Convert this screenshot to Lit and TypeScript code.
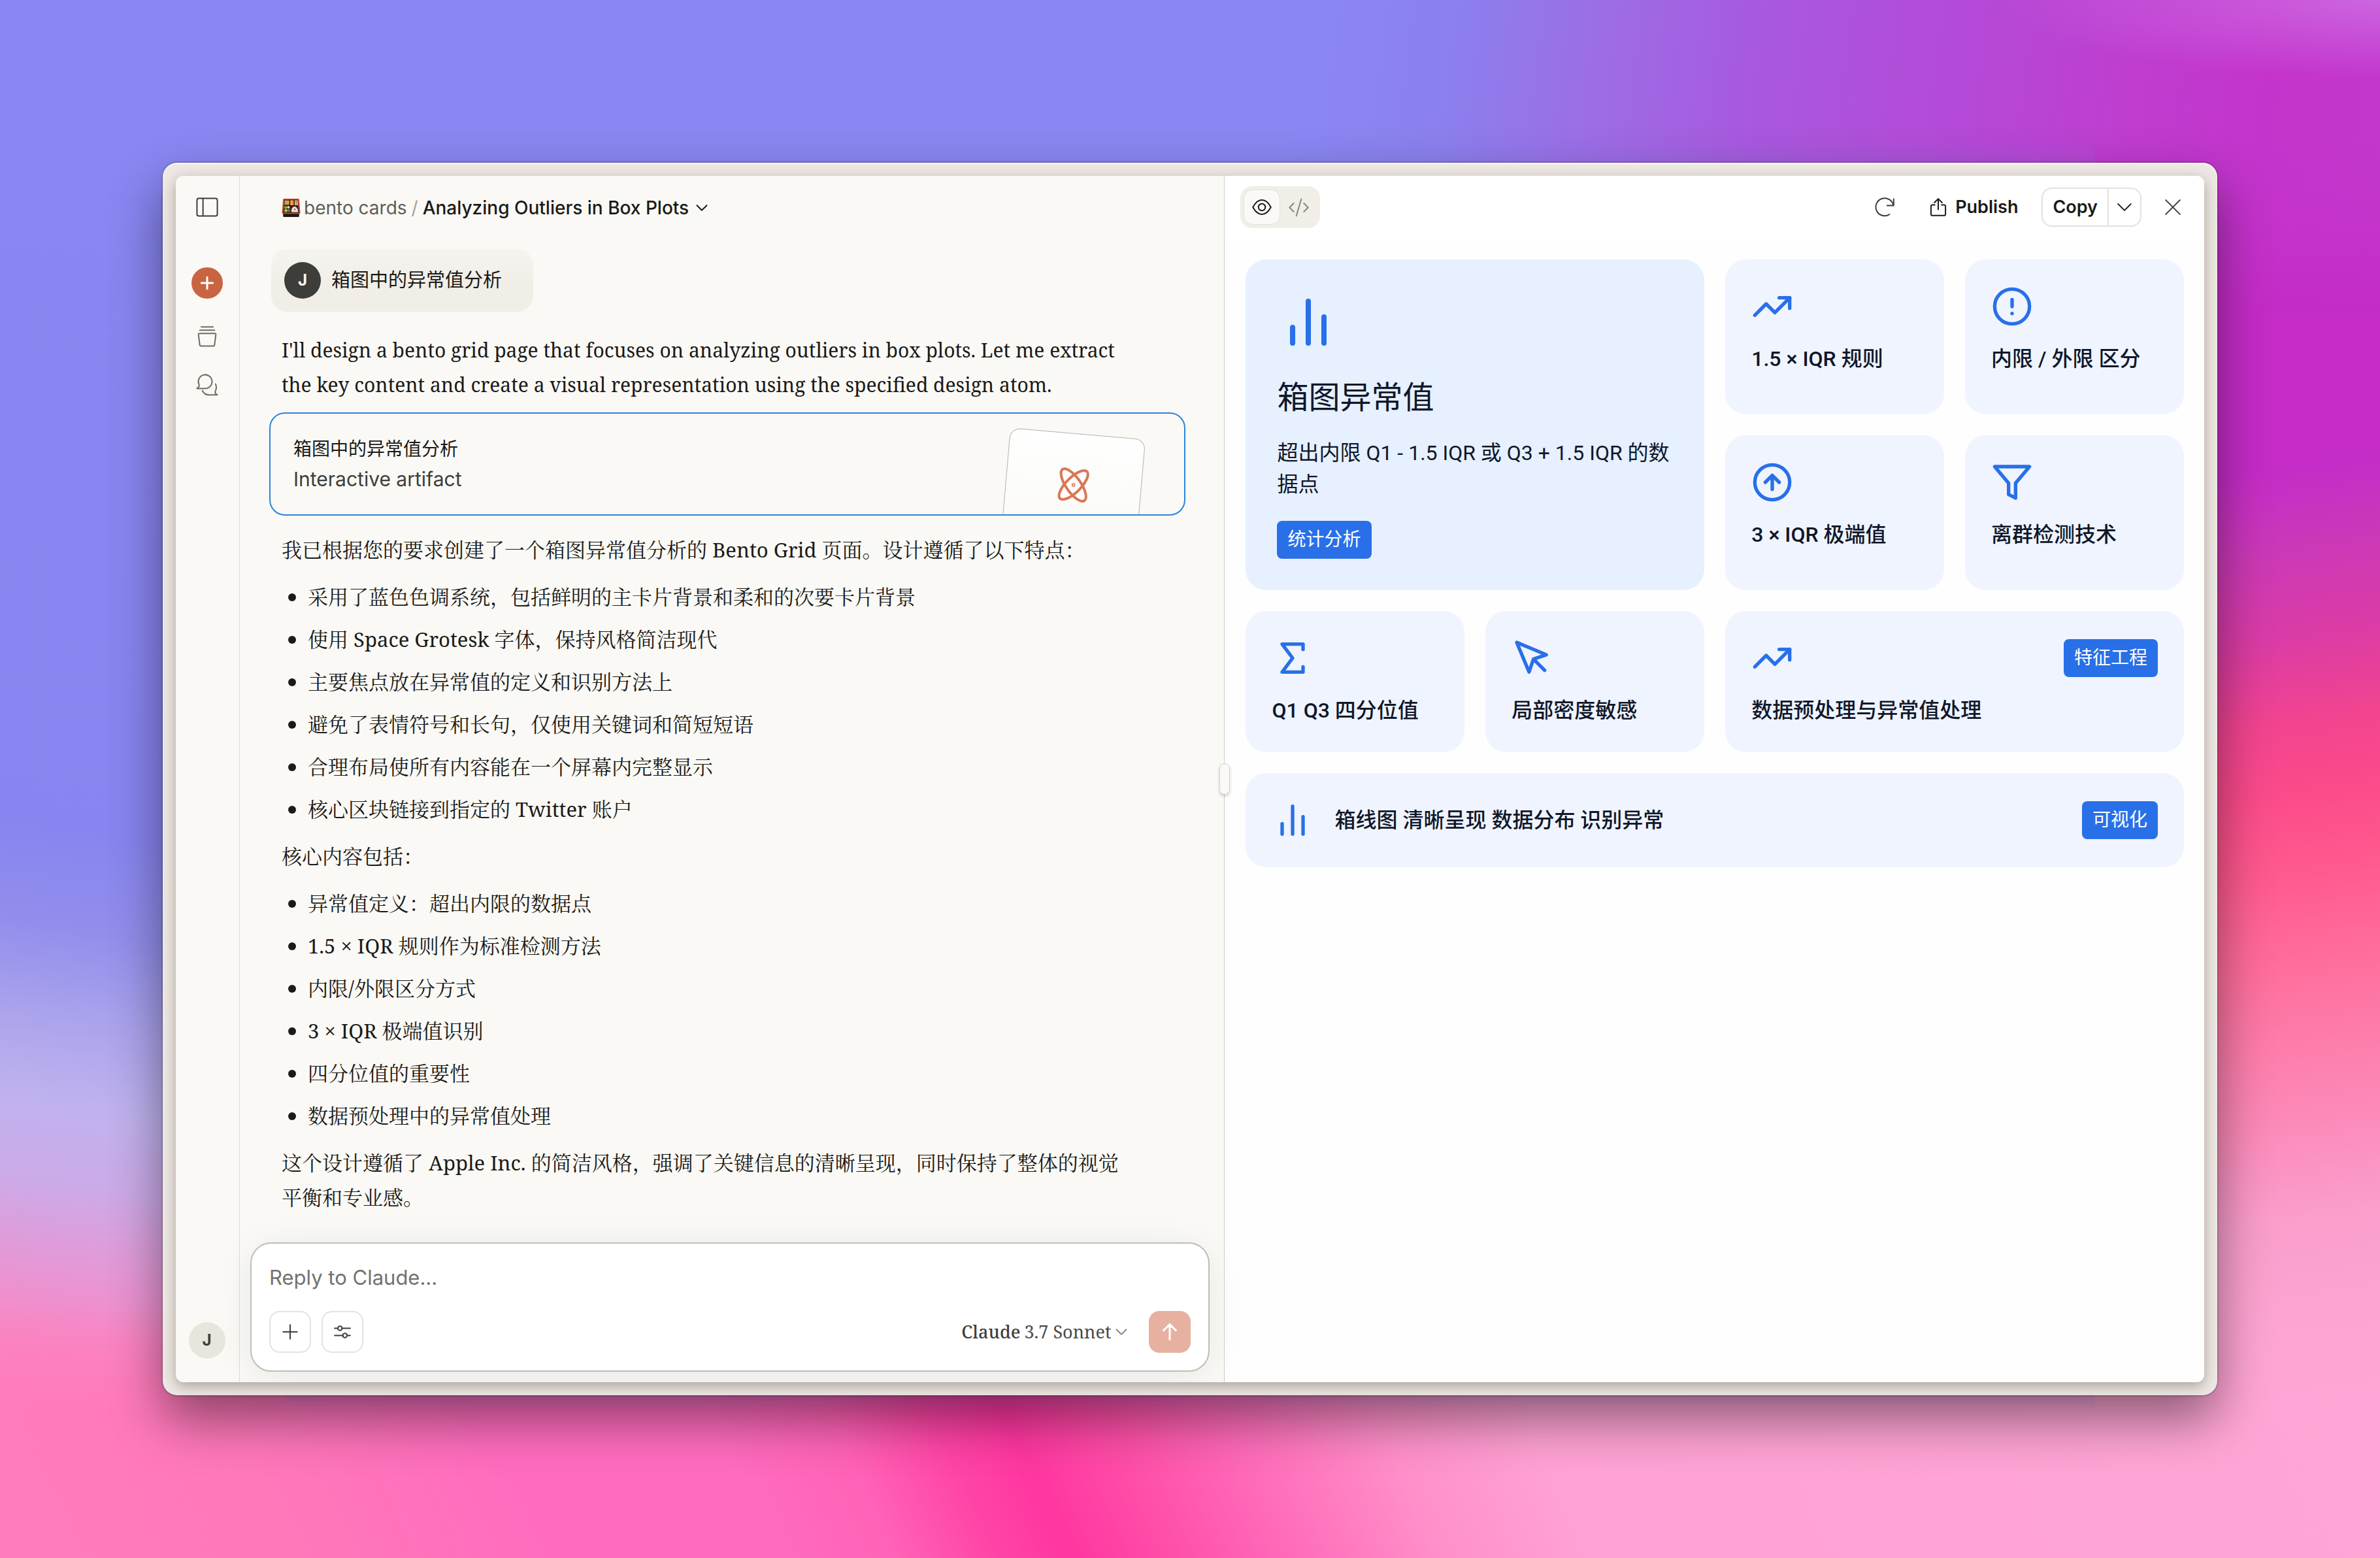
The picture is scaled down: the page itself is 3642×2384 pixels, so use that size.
import { LitElement, html, css, svg, SVGTemplateResult, TemplateResult } from "lit";
import { customElement, property, state } from "lit/decorators.js";

/* Glyph bodies, all drawn on a 24 × 24 grid. */
const GLYPHS: Record<string, SVGTemplateResult> = {
  panel: svg`<rect x="1" y="2.500" width="22" height="19" rx="2" /><path d="M7.500 2.500v19" />`,
  plus: svg`<path d="M12 4v16M4 12h16" />`,
  projects: svg`<path d="M5.200 1h13.600M3.600 4.600h16.800M3 8.400h18a1 1 0 0 1 1 1.100l-1.500 12a1.600 1.600 0 0 1-1.600 1.400H5.100a1.600 1.600 0 0 1-1.600-1.400L2 9.500a1 1 0 0 1 1-1.100Z" />`,
  chats: svg`<path d="M1 15.800h8.800a7.400 7.400 0 1 0-6.600-4.200c.5 1.100.1 2.700-2.200 4.200Z" /><path d="M6.800 18.200c1.500 3.200 4.600 4.600 7.600 4.600H23c-2-1.200-2.700-2.800-2.200-4 1.400-2.600 1.400-5.200.3-7.800" />`,
  chevron: svg`<path d="M3 7.500l9 9 9-9" />`,
  sliders: svg`<path d="M1 7h4.500M11.500 7H23M1 17h11.500M18.500 17H23" /><circle cx="8.500" cy="7" r="3" /><circle cx="15.500" cy="17" r="3" />`,
  up: svg`<path d="M12 22V2M4 10l8-8 8 8" />`,
  eye: svg`<path d="M1 12C4.500 5.500 8 3.200 12 3.200S19.500 5.500 23 12c-3.500 6.500-7 8.800-11 8.800S4.500 18.500 1 12Z" /><circle cx="12" cy="12" r="4.200" />`,
  code: svg`<path d="M6 7l-5 5 5 5M18 7l5 5-5 5M15 2L9 22" />`,
  refresh: svg`<path d="M18 20.800A10.800 10.800 0 1 1 22.600 9.800" /><path d="M23 2v8h-8" />`,
  share: svg`<path d="M7.500 9H4.200A1.700 1.700 0 0 0 2.500 10.700v10.600A1.700 1.700 0 0 0 4.200 23h15.600a1.700 1.700 0 0 0 1.700-1.700V10.700A1.700 1.700 0 0 0 19.800 9h-3.300M12 15V1M7 6l5-5 5 5" />`,
  close: svg`<path d="M2 2l20 20M22 2L2 22" />`,
  atom: svg`<ellipse cx="12" cy="12" rx="5.400" ry="14" transform="rotate(40 12 12)" /><ellipse cx="12" cy="12" rx="5.400" ry="14" transform="rotate(-40 12 12)" /><circle cx="12" cy="12" r=".4" />`,
  bars: svg`<path d="M18 20V10M12 20V4M6 20v-6" />`,
  trend: svg`<path d="M22 7l-8.500 8.500-5-5L2 17" /><path d="M16 7h6v6" />`,
  alert: svg`<circle cx="12" cy="12" r="10" /><path d="M12 8v4M12 16h.01" />`,
  circleUp: svg`<circle cx="12" cy="12" r="10" /><path d="M16 12l-4-4-4 4M12 16V8" />`,
  funnel: svg`<path d="M22 3H2l8 9.460V19l4 2v-8.540L22 3Z" />`,
  sigma: svg`<path d="M18 7V4H6l6 8-6 8h12v-3" />`,
  pointer: svg`<path d="M3 3l7.070 16.970 2.510-7.390 7.390-2.510L3 3Z" /><path d="M13 13l6 6" />`,
};

@customElement("ui-icon")
export class UiIcon extends LitElement {
  @property() name = "plus";
  @property({ type: Number }) size = 24;
  @property({ type: Number }) weight = 2;

  static styles = css`
    :host { display: inline-flex; flex: none; }
    svg { display: block; overflow: visible; fill: none; stroke: currentColor; stroke-linecap: round; stroke-linejoin: round; }
  `;

  render(): TemplateResult {
    return html`<svg width=${this.size} height=${this.size} viewBox="0 0 24 24" stroke-width=${(this.weight * 24) / this.size} aria-hidden="true">${GLYPHS[this.name]}</svg>`;
  }
}

@customElement("bento-card")
export class BentoCard extends LitElement {
  @property() icon = "bars";
  @property() label = "";
  @property() tag = "";

  static styles = css`
    :host {
      display: flex; flex-direction: column; gap: 24px; padding: 40px; border-radius: 32px;
      background: #f0f4fe; color: #0f172a; font-size: 32px; line-height: 48px; font-weight: 500;
    }
    :host([row]) { flex-direction: row; align-items: center; gap: 32px; }
    :host([row]) .top { display: contents; }
    :host([row]) .label { flex: 1; order: 1; }
    :host([row]) .tag { order: 2; }
    .top { display: flex; align-items: center; justify-content: space-between; }
    ui-icon { color: #2970e8; }
    .label { margin: 0; font: inherit; }
    .tag { padding: 8px 16px; border-radius: 8px; background: #2970e8; color: #fff; font-size: 28px; line-height: 42px; font-weight: 400; }
  `;

  render(): TemplateResult {
    return html`
      <div class="top">
        <ui-icon .name=${this.icon} .size=${64} .weight=${5.33}></ui-icon>
        ${this.tag ? html`<span class="tag">${this.tag}</span>` : null}
      </div>
      <h3 class="label">${this.label}</h3>
    `;
  }
}

const FEATURES = [
  "采用了蓝色色调系统，包括鲜明的主卡片背景和柔和的次要卡片背景",
  "使用 Space Grotesk 字体，保持风格简洁现代",
  "主要焦点放在异常值的定义和识别方法上",
  "避免了表情符号和长句，仅使用关键词和简短短语",
  "合理布局使所有内容能在一个屏幕内完整显示",
  "核心区块链接到指定的 Twitter 账户",
];

const TOPICS = [
  "异常值定义：超出内限的数据点",
  "1.5 × IQR 规则作为标准检测方法",
  "内限/外限区分方式",
  "3 × IQR 极端值识别",
  "四分位值的重要性",
  "数据预处理中的异常值处理",
];

@customElement("app-root")
export class AppRoot extends LitElement {
  @state() private view: "preview" | "code" = "preview";

  static styles = css`
    :host {
      --ui: Inter, "Noto Sans CJK SC", sans-serif;
      --prose: "Noto Serif", "Noto Serif CJK SC", "Liberation Serif", serif;
      --bento: Roboto, "Noto Sans CJK SC", sans-serif;
      --ink: #1a1a18;
      --soft: #3d3d3a;
      --paper: #faf9f5;
      display: block;
      font-family: var(--ui);
      color: var(--ink);
    }
    *, *::before, *::after { box-sizing: border-box; }
    button, select, textarea { font: inherit; color: inherit; border: 0; background: none; padding: 0; margin: 0; }
    button { display: inline-flex; align-items: center; justify-content: center; cursor: pointer; }
    a { color: inherit; text-decoration: none; }

    .desktop { position: relative; isolation: isolate; display: flex; min-height: 100vh; padding: 249px; overflow: hidden; background: #8a87f3; }
    .wall { position: absolute; z-index: -1; }
    .wall-left {
      inset: 0 88% 0 0;
      background: linear-gradient(188deg, #8a87f3 0, #8885f0 54%, #928eec 60%, #aca4ec 66%, #c0b2ee 71%, #ccaae8 76%, #e498d6 81%, #f68ac8 85%, #ff80be 90%, #ff74ba 100%);
    }
    .wall-right {
      inset: 0 0 0 88%;
      background: linear-gradient(171deg, #b84cd8 0, #c238ce 8%, #c52cc8 20%, #c52cc8 31%, #cb38b8 36%, #dc3ca4 42%, #f24490 47%, #fa4a8a 51%, #ff588e 56%, #ff6a98 61%, #fd7cab 67%, #fc8ab9 72%, #fa9ecc 78%, #fda4d2 84%, #ffa6d6 100%);
    }
    .wall-top {
      inset: 0 0 80% 0;
      background: linear-gradient(98deg, #8a87f3 54%, #8b80ee 60%, #9c6ee6 66%, #a858de 73%, #b44ad8 81%, #be3ed0 88%, #c434cc 94%, #c238cc 100%);
      mask-image: linear-gradient(#000 45%, transparent);
    }
    .wall-glow {
      inset: 0 0 95% 84%;
      background: radial-gradient(100% 100% at 100% 0, rgba(208, 120, 232, 0.7), transparent);
    }
    .wall-bottom {
      inset: 84% 0 0 0;
      background: linear-gradient(66deg, #ff7cbc 0, #ff78ba 12%, #ff6cbe 22%, #ff6cbe 31%, #ff62b6 36%, #ff44a6 40%, #ff36a0 43%, #ff4ea8 47%, #ff6cba 52%, #ff90ca 58%, #ffa2d4 64%, #ffa6d6 100%);
      mask-image: linear-gradient(transparent, #000 40%);
    }

    .frame {
      flex: 1; display: flex; min-width: 0; padding: 20px; border-radius: 22px; background: #ede8e3;
      box-shadow: 0 0 3px rgba(0, 0, 0, 0.6), 0 36px 80px rgba(0, 0, 0, 0.46), inset 0 2px 2px rgba(255, 255, 255, 0.7);
    }
    .window {
      flex: 1; min-width: 0; display: grid; grid-template-columns: 98px minmax(0, 503fr) minmax(0, 500fr);
      border-radius: 12px; overflow: hidden; background: var(--paper);
    }
    .lift { flex: 1; display: flex; min-width: 0; border-radius: 12px; box-shadow: 0 6px 20px rgba(40, 20, 10, 0.34); }

    .rail { display: flex; flex-direction: column; align-items: center; padding: 24px 2px 36px 0; border-right: 1px solid #dcdad2; color: #6c6b66; }
    .rail-button { width: 48px; height: 48px; }
    .rail-toggle { margin-bottom: 68px; color: var(--soft); }
    .rail-new { margin-bottom: 34px; border-radius: 50%; background: #c96442; color: #fff; }
    .rail-projects { margin-bottom: 26px; }
    .avatar { display: inline-flex; align-items: center; justify-content: center; flex: none; width: 56px; height: 56px; border-radius: 50%; font-size: 24px; line-height: 32px; font-weight: 700; }
    .avatar-light { margin-top: auto; background: #e8e6dc; color: var(--soft); }
    .avatar-dark { background: #3d3d3a; color: var(--paper); }

    .chat { position: relative; display: flex; flex-direction: column; min-width: 0; border-right: 1px solid #d2cfcc; }
    .bar { display: flex; align-items: center; height: 96px; flex: none; }
    .crumbs { padding: 2px 0 0 64px; gap: 7px; font-size: 28px; line-height: 40px; }
    .crumb-project { display: inline-flex; align-items: center; gap: 5px; color: #5e5d59; }
    .crumb-slash { color: #a3a19a; }
    .crumb-title { gap: 10px; font-weight: 500; }

    .messages { flex: 1; padding: 16px 59px 0 45px; }
    .user { display: inline-flex; align-items: center; gap: 16px; margin: 0 0 0 3px; padding: 20px 48px 20px 20px; border-radius: 24px; background: linear-gradient(#f5f4ef, #f0eee6 60%); font-size: 29px; line-height: 40px; }
    .user p { margin: 0; }
    .prose { margin: 0 80px 0 19px; font-family: var(--prose); font-size: 31px; line-height: 53px; }
    .prose p { margin: 0; }
    .prose ul { display: flex; flex-direction: column; gap: 12px; margin: 19px 0; padding: 0; list-style: none; }
    .prose li { display: flex; align-items: center; gap: 18px; padding-left: 10px; }
    .prose li::before { content: ""; width: 12px; height: 12px; border-radius: 50%; background: var(--ink); }
    .intro { margin-top: 32px; font-size: 30px; }

    .artifact { display: flex; width: 100%; height: 158px; margin: 16px 0 26px; padding: 0 68px 0 35px; justify-content: space-between; align-items: flex-start; border: 2px solid #2c84db; border-radius: 24px; overflow: hidden; text-align: left; }
    .artifact-text { display: flex; flex-direction: column; padding-top: 31px; font-size: 28px; line-height: 46px; }
    .artifact-kind { color: var(--soft); font-size: 30px; }
    .sheet { display: flex; align-items: flex-start; justify-content: center; width: 208px; height: 220px; margin-top: 30px; padding-top: 53px; border: 1px solid #b4b3ae; border-radius: 16px; background: linear-gradient(#fff, var(--paper) 70%); color: #d97757; transform: rotate(5deg); }

    .composer { display: flex; flex-direction: column; gap: 27px; margin: 0 22px 16px 16px; padding: 28px 27px 27px; border: 2px solid #bdbdbb; border-radius: 32px; background: #fff; box-shadow: 0 8px 56px rgba(0, 0, 0, 0.07); }
    .composer-input { display: block; width: 100%; height: 48px; resize: none; outline: none; overflow: hidden; font-size: 31px; line-height: 48px; }
    .composer-input::placeholder { color: #73726c; opacity: 1; }
    .composer-row { display: flex; align-items: center; gap: 16px; }
    .square { width: 64px; height: 64px; border-radius: 16px; }
    .square-line { border: 2px solid #e4e3e0; color: var(--soft); }
    .send { margin-left: 16px; background: #e6b1a0; color: #fff; }
    .model { display: flex; align-items: center; gap: 6px; margin-left: auto; font-family: var(--prose); font-size: 27px; line-height: 40px; color: var(--soft); }
    .model-name { font-weight: 500; }
    .model select { appearance: none; field-sizing: content; outline: none; color: #4b4a46; }
    .model ui-icon { color: #8a8984; }

    .grip { position: absolute; z-index: 2; top: 50%; right: -9px; width: 16px; height: 48px; margin-top: -24px; border: 1px solid #d4d2cc; border-radius: 8px; background: var(--paper); box-shadow: 0 3px 5px rgba(0, 0, 0, 0.16); }

    .pane { display: flex; flex-direction: column; min-width: 0; background: #fefefe; }
    .pane-bar { gap: 24px; padding: 0 24px; background: #fff; font-size: 27px; line-height: 40px; font-weight: 600; }
    .switch { display: flex; margin-right: auto; padding: 5px; border-radius: 18px; background: #f0eee6; }
    .switch button { width: 56px; height: 54px; border: 1px solid transparent; border-radius: 14px; color: #87867f; }
    .switch button[aria-pressed="true"] { background: var(--paper); border-color: #e4e2da; color: var(--ink); }
    .tool { width: 64px; height: 48px; color: var(--soft); }
    .tool-close { width: 48px; }
    .publish { gap: 12px; padding: 0 12px; }
    .split { display: flex; height: 60px; border: 2px solid #e2e1df; border-radius: 16px; }
    .split-main { padding: 0 15px; border-right: 2px solid #e2e1df; }
    .split-more { width: 48px; }

    .bento { display: grid; grid-template-columns: repeat(4, minmax(0, 1fr)); grid-template-rows: repeat(2, 237px) auto auto; gap: 32px; padding: 32px; padding-right: 31px; font-family: var(--bento); color: #0f172a; }
    .hero { grid-area: 1 / 1 / 3 / 3; display: flex; flex-direction: column; align-items: flex-start; padding: 48px 40px 48px 48px; border-radius: 32px; background: #e6f0fe; }
    .hero ui-icon { color: #2970e8; }
    .hero-title { margin: 32px 0 24px; font-size: 48px; line-height: 72px; font-weight: 400; }
    .hero-text { margin: 0 0 32px; font-size: 32px; line-height: 48px; }
    .hero-tag { padding: 8px 16px; border-radius: 8px; background: #2970e8; color: #fff; font-size: 28px; line-height: 42px; }
    .wide { grid-column: span 2; }
    .full { grid-column: 1 / -1; }
  `;

  private renderList(items: string[]): TemplateResult {
    return html`<ul>${items.map((text) => html`<li><span>${text}</span></li>`)}</ul>`;
  }

  private renderBentoEmoji(): TemplateResult {
    return html`<svg width="29" height="28" viewBox="0 0 29 28" role="img" aria-label="Bento box">
      <path d="M2 23h25l-.5 5h-24z" fill="#1d1715" />
      <path d="M3.500 0h22a1.500 1.500 0 0 1 1.400 1.300L28.500 21.500a1.500 1.500 0 0 1-1.500 1.700H2A1.500 1.500 0 0 1 .5 21.500L2.100 1.300A1.500 1.500 0 0 1 3.500 0Z" fill="#d8452f" />
      <path d="M4.200 1.500h20.600l1.800 20H2.400z" fill="#33201a" />
      <path d="M4.800 2.500h7l-.3 7H4.200z" fill="#b98a45" />
      <path d="M5 4.500h6.500M4.800 7h6.500" stroke="#e8c878" />
      <path d="M13 2.500h5.500v7.500H13z" fill="#e8862c" />
      <path d="M15.700 2.500v7.500" stroke="#ffd060" />
      <path d="M20 2.500h4.500l.6 7.500H20z" fill="#e9c3a0" />
      <circle cx="22.300" cy="4.800" r="1.200" fill="#d8452f" />
      <circle cx="22.500" cy="8" r="1.200" fill="#7a9a3a" />
      <circle cx="6" cy="13.500" r="2.300" fill="#7fb02e" />
      <circle cx="10.300" cy="13.200" r="2" fill="#e6dca8" />
      <circle cx="6.500" cy="18.300" r="2.400" fill="#a8cc4a" />
      <circle cx="11" cy="18.200" r="2.300" fill="#4f8a24" />
      <path d="M15 20.500c-.8-4 1.400-8.500 4.700-8.500s5.900 4.500 5.300 8.500z" fill="#e6e2e0" />
      <circle cx="20" cy="16.500" r="1.300" fill="#d8342c" />
    </svg>`;
  }

  private renderRail(): TemplateResult {
    return html`<nav class="rail" aria-label="Sidebar">
      <button class="rail-button rail-toggle" aria-label="Open sidebar"><ui-icon name="panel" .size=${34} .weight=${2}></ui-icon></button>
      <button class="rail-button rail-new" aria-label="New chat"><ui-icon name="plus" .size=${26} .weight=${3}></ui-icon></button>
      <button class="rail-button rail-projects" aria-label="Projects"><ui-icon name="projects" .size=${32} .weight=${2}></ui-icon></button>
      <button class="rail-button" aria-label="Chats"><ui-icon name="chats" .size=${34} .weight=${2}></ui-icon></button>
      <button class="avatar avatar-light" aria-label="Account">J</button>
    </nav>`;
  }

  private renderChat(): TemplateResult {
    return html`<main class="chat">
      <header class="bar crumbs">
        <a class="crumb-project" href="#project">${this.renderBentoEmoji()}<span>bento cards</span></a>
        <span class="crumb-slash">/</span>
        <button class="crumb-title">Analyzing Outliers in Box Plots<ui-icon name="chevron" .size=${20} .weight=${2}></ui-icon></button>
      </header>
      <section class="messages">
        <div class="user"><span class="avatar avatar-dark">J</span><p>箱图中的异常值分析</p></div>
        <div class="prose intro">
          <p>I'll design a bento grid page that focuses on analyzing outliers in box plots. Let me extract the key content and create a visual representation using the specified design atom.</p>
        </div>
        <button class="artifact">
          <span class="artifact-text"><span>箱图中的异常值分析</span><span class="artifact-kind">Interactive artifact</span></span>
          <span class="sheet"><ui-icon name="atom" .size=${50} .weight=${4}></ui-icon></span>
        </button>
        <div class="prose" lang="zh-CN">
          <p>我已根据您的要求创建了一个箱图异常值分析的 Bento Grid 页面。设计遵循了以下特点：</p>
          ${this.renderList(FEATURES)}
          <p>核心内容包括：</p>
          ${this.renderList(TOPICS)}
          <p>这个设计遵循了 Apple Inc. 的简洁风格，强调了关键信息的清晰呈现，同时保持了整体的视觉平衡和专业感。</p>
        </div>
      </section>
      <form class="composer" @submit=${(e: Event) => e.preventDefault()}>
        <textarea class="composer-input" rows="1" aria-label="Message" placeholder="Reply to Claude..."></textarea>
        <div class="composer-row">
          <button type="button" class="square square-line" aria-label="Add content"><ui-icon name="plus" .size=${32} .weight=${2}></ui-icon></button>
          <button type="button" class="square square-line" aria-label="Tools"><ui-icon name="sliders" .size=${26} .weight=${2}></ui-icon></button>
          <div class="model">
            <label class="model-name" for="model">Claude</label>
            <select id="model"><option>3.7 Sonnet</option></select>
            <ui-icon name="chevron" .size=${20} .weight=${2}></ui-icon>
          </div>
          <button class="square send" aria-label="Send"><ui-icon name="up" .size=${28} .weight=${3}></ui-icon></button>
        </div>
      </form>
      <div class="grip" role="separator" aria-orientation="vertical"></div>
    </main>`;
  }

  private renderPane(): TemplateResult {
    return html`<section class="pane">
      <header class="bar pane-bar">
        <div class="switch">
          <button aria-label="Preview" aria-pressed=${this.view === "preview"} @click=${() => (this.view = "preview")}><ui-icon name="eye" .size=${30} .weight=${2}></ui-icon></button>
          <button aria-label="Code" aria-pressed=${this.view === "code"} @click=${() => (this.view = "code")}><ui-icon name="code" .size=${31} .weight=${2}></ui-icon></button>
        </div>
        <button class="tool" aria-label="Refresh"><ui-icon name="refresh" .size=${30} .weight=${2}></ui-icon></button>
        <button class="publish"><ui-icon name="share" .size=${28} .weight=${2}></ui-icon>Publish</button>
        <div class="split">
          <button class="split-main">Copy</button>
          <button class="split-more" aria-label="More copy options"><ui-icon name="chevron" .size=${26} .weight=${2}></ui-icon></button>
        </div>
        <button class="tool tool-close" aria-label="Close"><ui-icon name="close" .size=${26} .weight=${2}></ui-icon></button>
      </header>
      <div class="bento" lang="zh-CN">
        <article class="hero">
          <ui-icon name="bars" .size=${96} .weight=${8}></ui-icon>
          <h2 class="hero-title">箱图异常值</h2>
          <p class="hero-text">超出内限 Q1 - 1.5 IQR 或 Q3 + 1.5 IQR 的数据点</p>
          <span class="hero-tag">统计分析</span>
        </article>
        <bento-card icon="trend" label="1.5 × IQR 规则"></bento-card>
        <bento-card icon="alert" label="内限 / 外限 区分"></bento-card>
        <bento-card icon="circleUp" label="3 × IQR 极端值"></bento-card>
        <bento-card icon="funnel" label="离群检测技术"></bento-card>
        <bento-card icon="sigma" label="Q1 Q3 四分位值"></bento-card>
        <bento-card icon="pointer" label="局部密度敏感"></bento-card>
        <bento-card class="wide" icon="trend" label="数据预处理与异常值处理" tag="特征工程"></bento-card>
        <bento-card class="full" row icon="bars" label="箱线图 清晰呈现 数据分布 识别异常" tag="可视化"></bento-card>
      </div>
    </section>`;
  }

  render(): TemplateResult {
    return html`<div class="desktop">
      <div class="wall wall-left"></div>
      <div class="wall wall-right"></div>
      <div class="wall wall-top"></div>
      <div class="wall wall-glow"></div>
      <div class="wall wall-bottom"></div>
      <div class="frame"><div class="lift"><div class="window">${this.renderRail()}${this.renderChat()}${this.renderPane()}</div></div></div>
    </div>`;
  }
}
